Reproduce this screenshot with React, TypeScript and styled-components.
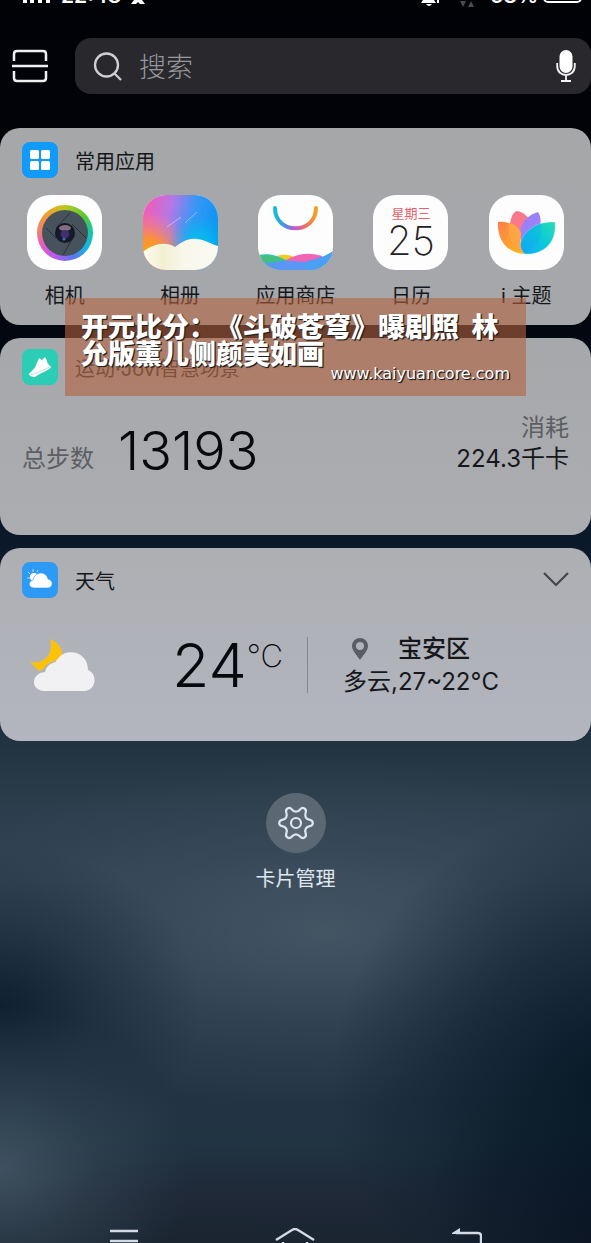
import React from "react";
import styled, { createGlobalStyle } from "styled-components";

const cjk = '"Noto Sans CJK SC", sans-serif';

const GlobalStyle = createGlobalStyle`
  * { box-sizing: border-box; }
  body { margin: 0; background: #020308; }
  button { border: 0; padding: 0; background: none; color: inherit; font: inherit; cursor: pointer; }
  a { color: inherit; text-decoration: none; }
  h1, h2, p { margin: 0; font-weight: 400; }
  svg { display: block; flex: none; }
`;

const Screen = styled.div`
  min-height: 100vh;
  display: flex;
  flex-direction: column;
  overflow: hidden;
  font-family: Inter, ${cjk};
  color: #15171b;
  background:
    radial-gradient(ellipse 32% 13% at 0% 94%, rgba(72, 92, 106, 0.75) 0%, rgba(66, 86, 100, 0.35) 50%, rgba(60, 80, 96, 0) 100%),
    radial-gradient(ellipse 34% 13% at 0% 81%, rgba(12, 30, 44, 0.9) 0%, rgba(14, 32, 46, 0.4) 50%, rgba(14, 32, 46, 0) 100%),
    radial-gradient(ellipse 48% 22% at 104% 87%, rgba(6, 24, 38, 0.95) 0%, rgba(8, 26, 40, 0.5) 55%, rgba(8, 28, 44, 0) 100%),
    radial-gradient(ellipse 34% 14% at 106% 98%, rgba(14, 16, 32, 1) 0%, rgba(14, 16, 32, 0) 100%),
    radial-gradient(ellipse 70% 14% at 55% 75%, rgba(74, 92, 104, 0.75) 0%, rgba(68, 86, 100, 0.35) 50%, rgba(60, 78, 94, 0) 100%),
    linear-gradient(180deg, #010206 0%, #03050c 24%, #071021 36%, #0c1a2c 45%, #223341 60%, #2c3e4c 65%, #314354 71%, #2d3f52 77%, #253746 84%, #203341 92%, #1f2938 96%, #1a2531 100%);
`;

const StatusBar = styled.div`
  height: 8px;
  display: flex;
  align-items: flex-end;
  justify-content: space-between;
  padding: 0 9px 0 22px;
  overflow: hidden;
  color: #fff;
`;

const StatusGroup = styled.div<{ $gap: number }>`
  height: 28px;
  display: flex;
  align-items: flex-end;
  gap: ${(p) => p.$gap}px;
`;

const StatusText = styled.span`
  font-size: 21px;
  font-weight: 600;
  line-height: 24px;
`;

const TopBar = styled.header`
  display: flex;
  align-items: center;
  gap: 27px;
  padding: 30px 0 34px 12px;
`;

const SearchBox = styled.label`
  flex: 1;
  min-width: 0;
  height: 56px;
  display: flex;
  align-items: center;
  gap: 16px;
  padding: 0 15px 0 18px;
  border-radius: 16px;
  background: #29292d;
`;

const SearchInput = styled.input`
  flex: 1;
  min-width: 0;
  border: 0;
  outline: 0;
  padding: 0;
  background: transparent;
  color: #e4e5e8;
  font: 300 27px/36px ${cjk};
  &::placeholder { color: #98989c; opacity: 1; }
`;

const Stack = styled.main`
  position: relative;
  display: flex;
  flex-direction: column;
  gap: 13px;
`;

const Card = styled.section<{ $top: number; $from: string; $to: string }>`
  padding: ${(p) => p.$top}px 22px 0;
  border-radius: 20px;
  background: linear-gradient(180deg, ${(p) => p.$from}, ${(p) => p.$to});
`;

const CardHeader = styled.div`
  display: flex;
  align-items: center;
  gap: 17px;
  height: 36px;
`;

const CardTitle = styled.h2<{ $muted?: boolean }>`
  flex: 1;
  padding-top: 4px;
  font-size: 20px;
  line-height: 24px;
  color: ${(p) => (p.$muted ? "#35373b" : "#15171b")};
`;

const HeaderIcon = styled.span<{ $bg: string }>`
  width: 36px;
  height: 36px;
  display: grid;
  place-items: center;
  border-radius: 8px;
  background: ${(p) => p.$bg};
`;

const AppGrid = styled.nav`
  display: grid;
  grid-template-columns: repeat(5, 1fr);
  margin: 0 -15px;
  padding: 17px 0;
`;

const AppLink = styled.a`
  display: flex;
  flex-direction: column;
  align-items: center;
  gap: 14px;
  font-size: 20px;
  line-height: 24px;
  white-space: nowrap;
`;

const AppTile = styled.span`
  width: 75px;
  height: 75px;
  display: flex;
  flex-direction: column;
  align-items: center;
  justify-content: center;
  border-radius: 23px;
  overflow: hidden;
  background: #fdfdfe;
`;

const LensRing = styled.span`
  width: 56px;
  height: 56px;
  display: grid;
  place-items: center;
  border-radius: 50%;
  background: conic-gradient(#b9c81e, #58c832 50deg, #12c9a0 85deg, #14b6e6 125deg, #5a78f0 160deg, #b45af0 200deg, #e65ac8 240deg, #f0826e 275deg, #f0a028 320deg, #b9c81e);
`;

const Weekday = styled.span`
  font-size: 13px;
  line-height: 16px;
  color: #e8606a;
`;

const DayNumber = styled.span`
  font-size: 40px;
  font-weight: 200;
  line-height: 40px;
  color: #222;
`;

const StepsRow = styled.div`
  display: flex;
  align-items: flex-end;
  padding: 27px 0 61px;
`;

const StepsLabel = styled.span`
  margin-right: 24px;
  font-size: 24px;
  line-height: 31px;
  color: #5c5e63;
`;

const StepsValue = styled.span`
  flex: 1;
  font-size: 54px;
  font-weight: 300;
  line-height: 46px;
  color: #08090c;
`;

const Burned = styled.p`
  display: flex;
  flex-direction: column;
  text-align: right;
  font-size: 24px;
  line-height: 31px;
`;

const BurnedLabel = styled.span`
  color: #5c5e63;
`;

const WeatherRow = styled.div`
  display: grid;
  grid-template-columns: 142fr 135fr 284fr;
  align-items: center;
  margin: 0 -22px;
  padding: 34px 0 43px 30px;
`;

const Temperature = styled.p`
  display: flex;
  align-items: flex-start;
  color: #08090c;
  font-size: 61px;
  font-weight: 300;
  line-height: 66px;
`;

const Unit = styled.span`
  font-size: 31px;
  font-weight: 200;
  line-height: 48px;
`;

const Place = styled.div`
  position: relative;
  display: flex;
  flex-direction: column;
  padding-left: 36px;
  font-size: 24px;
  line-height: 33px;
  white-space: nowrap;
  &::before {
    content: "";
    position: absolute;
    left: 0;
    top: 5px;
    bottom: 5px;
    width: 1px;
    background: #85878d;
  }
`;

const District = styled.span`
  display: flex;
  align-items: center;
  gap: 30px;
  padding-left: 9px;
  font-weight: 500;
`;

const Banner = styled.aside`
  position: absolute;
  top: 170px;
  left: 11%;
  width: 78%;
  padding: 14px 16px;
  background: rgba(178, 98, 62, 0.6);
  color: #fff;
  text-shadow: 1px 1px 1px #222, 1px 1px 0 #222;
`;

const BannerTitle = styled.h1`
  font: 900 27px/27px ${cjk};
  text-spacing-trim: space-all;
`;

const BannerLink = styled.a`
  display: block;
  text-align: right;
  font: 16px/16px "DejaVu Sans", sans-serif;
`;

const Manage = styled.button`
  align-self: center;
  display: flex;
  flex-direction: column;
  align-items: center;
  gap: 14px;
  margin-top: 52px;
  color: #e0e6ee;
  font-size: 20px;
  line-height: 24px;
`;

const Round = styled.span`
  width: 60px;
  height: 60px;
  display: grid;
  place-items: center;
  border-radius: 50%;
  background: #5b6874;
`;

const NavBar = styled.nav`
  height: 15px;
  display: grid;
  grid-template-columns: repeat(3, 1fr);
  align-items: start;
  margin-top: auto;
  padding: 0 38px;
  overflow: hidden;
`;

const NavButton = styled.button`
  display: flex;
  justify-content: center;
`;

/* Six-toothed gear outline, smoothed through the midpoints of its corners. */
function gearPath(outer: number, inner: number) {
  const pts: number[][] = [];
  for (let i = 0; i < 6; i++) {
    const corners = [[-9, outer], [9, outer], [19, inner], [41, inner]];
    corners.forEach(([deg, r]) => {
      const a = ((i * 60 + deg) * Math.PI) / 180;
      pts.push([Math.cos(a) * r, Math.sin(a) * r]);
    });
  }
  const mid = (a: number[], b: number[]) => `${((a[0] + b[0]) / 2).toFixed(2)} ${((a[1] + b[1]) / 2).toFixed(2)}`;
  const n = pts.length;
  return (
    `M${mid(pts[n - 1], pts[0])}` +
    pts.map((p, i) => `Q${p[0].toFixed(2)} ${p[1].toFixed(2)} ${mid(p, pts[(i + 1) % n])}`).join("") +
    "Z"
  );
}

const CameraArt = () => (
  <LensRing>
    <svg width="46" height="46" viewBox="0 0 46 46">
      <defs>
        <radialGradient id="lens" cx="50%" cy="55%">
          <stop offset="0" stopColor="#26306a" />
          <stop offset="0.5" stopColor="#171b33" />
          <stop offset="1" stopColor="#14171e" />
        </radialGradient>
      </defs>
      <circle cx="23" cy="23" r="23" fill="#46535d" />
      <g stroke="#273038" strokeWidth="1" fill="none">
        <path d="M14 18L28 3M30 14L44 28M32 26L21 45M14 28L4 18" />
      </g>
      <circle cx="23" cy="23" r="10" fill="url(#lens)" />
      <ellipse cx="23" cy="18" rx="6" ry="3" fill="#a58a98" opacity="0.75" />
      <circle cx="23" cy="24" r="4" fill="#41306e" />
      <circle cx="22" cy="29" r="1.500" fill="#4868c8" />
    </svg>
  </LensRing>
);

const GalleryArt = () => (
  <svg width="75" height="75" viewBox="0 0 75 75">
    <defs>
      <linearGradient id="sky" x1="0" y1="0.200" x2="1" y2="0.400">
        <stop offset="0" stopColor="#f55ab4" />
        <stop offset="0.350" stopColor="#b478e6" />
        <stop offset="0.650" stopColor="#3c96f5" />
        <stop offset="1" stopColor="#0a96f5" />
      </linearGradient>
      <radialGradient id="sun" cx="0.050" cy="0.800" r="0.600">
        <stop offset="0" stopColor="#ffaa00" />
        <stop offset="0.400" stopColor="#ff9628" stopOpacity="0.850" />
        <stop offset="1" stopColor="#ff7896" stopOpacity="0" />
      </radialGradient>
      <radialGradient id="sea" cx="0.750" cy="0.650" r="0.400">
        <stop offset="0" stopColor="#00c8e6" />
        <stop offset="1" stopColor="#00b4f0" stopOpacity="0" />
      </radialGradient>
      <linearGradient id="dune" x1="0" y1="0" x2="1" y2="0">
        <stop offset="0" stopColor="#fffdf2" />
        <stop offset="0.250" stopColor="#f2f0d2" />
        <stop offset="0.550" stopColor="#f8f7ea" />
        <stop offset="1" stopColor="#fbfaf2" />
      </linearGradient>
    </defs>
    <rect width="75" height="75" fill="url(#sky)" />
    <rect width="75" height="75" fill="url(#sun)" />
    <rect width="75" height="75" fill="url(#sea)" />
    <path d="M24 32L38 22M42 28L54 17" stroke="#fff" strokeWidth="1" opacity="0.400" />
    <path d="M0 57C10 49 22 46 32 52C38 48 44 43 54 44C63 45 68 49 75 51V75H0Z" fill="url(#dune)" />
  </svg>
);

const StoreArt = () => (
  <svg width="75" height="75" viewBox="0 0 75 75">
    <defs>
      <linearGradient id="handle" x1="0" y1="0" x2="1" y2="0">
        <stop offset="0" stopColor="#14bed2" />
        <stop offset="0.250" stopColor="#508ce6" />
        <stop offset="0.500" stopColor="#c85ac8" />
        <stop offset="0.750" stopColor="#f06e64" />
        <stop offset="1" stopColor="#f5a01e" />
      </linearGradient>
    </defs>
    <path d="M17 13C17 40 58 40 58 13" fill="none" stroke="url(#handle)" strokeWidth="4" strokeLinecap="round" />
    <path d="M14 63C24 58 32 59 42 65V75H14Z" fill="#f5c81e" />
    <path d="M0 60C12 58 18 60 30 66V75H0Z" fill="#28c8be" />
    <path d="M28 65C42 58 50 57 64 61V75H28Z" fill="#f064b4" />
    <path d="M50 66C60 64 68 61 75 56V75H50Z" fill="#14b4e6" />
    <path d="M0 66C12 71 22 64 34 66C48 68 56 66 64 61V75H0Z" fill="#5a96f5" />
    <path d="M50 66C60 64 68 61 75 57V75H44Z" fill="#4ba0f5" />
    <path d="M3 66C12 70 20 65 28 65C18 62 12 60 3 60Z" fill="#46be82" />
  </svg>
);

const ThemeArt = () => (
  <svg width="75" height="75" viewBox="0 0 75 75">
    <defs>
      <linearGradient id="orange" x1="0" y1="0" x2="0.800" y2="1">
        <stop offset="0" stopColor="#ff7d4b" />
        <stop offset="1" stopColor="#ffb41e" />
      </linearGradient>
      <linearGradient id="teal" x1="0" y1="1" x2="1" y2="0">
        <stop offset="0" stopColor="#14aaf5" />
        <stop offset="0.500" stopColor="#0ac8dc" />
        <stop offset="1" stopColor="#28dcb4" />
      </linearGradient>
    </defs>
    <path d="M21 29C22 22 24 17 28 16C34 17 39 21 42 27L35 48Z" fill="#fa788c" />
    <path d="M49 17C42 19 35 24 32 32C30 42 32 48 36 54C48 44 56 28 49 17Z" fill="#9b82fa" />
    <path d="M9 27C8 45 18 58 36 59C31 52 31 46 32 38C26 29 18 26 9 27Z" fill="url(#orange)" />
    <path d="M20 28C24 28 30 32 32 38C31 46 31 52 35 58C23 52 18 40 20 28Z" fill="#ffa546" />
    <path d="M66 27C68 46 56 60 36 59C28 52 32 42 40 35C48 28 56 27 66 27Z" fill="url(#teal)" stroke="#fff" strokeWidth="0.500" strokeOpacity="0.500" />
    <path d="M36 59C28 52 32 42 40 35C44 31 48 30 52 28C55 41 48 52 36 59Z" fill="#1496f5" opacity="0.250" />
  </svg>
);

const apps = [
  { name: "相机", art: <CameraArt /> },
  { name: "相册", art: <GalleryArt /> },
  { name: "应用商店", art: <StoreArt /> },
  { name: "日历", art: <><Weekday>星期三</Weekday><DayNumber>25</DayNumber></> },
  { name: "i 主题", art: <ThemeArt /> },
];

export default function App() {
  return (
    <Screen>
      <GlobalStyle />
      <StatusBar>
        <StatusGroup $gap={10}>
          <svg width="29" height="24" viewBox="0 0 29 24" fill="#fff">
            <path d="M1 12h4v7H1zM8 9h4v10H8zM16 5h4v14h-4zM24 1h4v18h-4z" />
          </svg>
          <StatusText>22:48</StatusText>
          <svg width="14" height="26" viewBox="0 0 14 26" fill="#fff">
            <path d="M4 10h6l1 8 3 4H9l-2-2-2 2H0l3-4z" />
          </svg>
        </StatusGroup>
        <StatusGroup $gap={5}>
          <svg width="20" height="26" viewBox="0 0 20 26" fill="#fff">
            <path d="M3 18C5 8 12 8 14 18l2 3H1zM6 22h6q-3 4-6 0M17 17h2v4h-2z" />
          </svg>
          <svg width="40" height="26" viewBox="0 0 40 26" fill="#4a4b50">
            <path d="M15 19h6l-3 6zM23 25h6l-3-6z" />
          </svg>
          <StatusText>68%</StatusText>
          <svg width="39" height="24" viewBox="0 0 39 24" fill="none" stroke="#fff" strokeWidth="2">
            <rect x="1" y="2" width="37" height="16" rx="4" />
          </svg>
        </StatusGroup>
      </StatusBar>

      <TopBar>
        <button aria-label="扫一扫">
          <svg width="36" height="34" viewBox="0 0 36 34" fill="none" stroke="#f0f0f2" strokeWidth="2.500">
            <path d="M2 12V5Q2 2 5 2H31Q34 2 34 5V12M0 17H36M2 22V29Q2 32 5 32H31Q34 32 34 29V22" />
          </svg>
        </button>
        <SearchBox>
          <svg width="30" height="30" viewBox="0 0 30 30" fill="none" stroke="#d0d0d3" strokeWidth="2.300">
            <circle cx="13.500" cy="14" r="11.500" />
            <path d="M21.500 22.500L28 29" />
          </svg>
          <SearchInput type="search" placeholder="搜索" aria-label="搜索" />
          <button aria-label="语音搜索">
            <svg width="20" height="32" viewBox="0 0 20 32">
              <rect x="3.500" y="0" width="13" height="23" rx="6.500" fill="#fff" />
              <path d="M1.200 13V16C1.200 28 18.800 28 18.800 16V13M10 25V31M5 31H15" fill="none" stroke="#f4f4f6" strokeWidth="1.800" />
            </svg>
          </button>
        </SearchBox>
      </TopBar>

      <Stack>
        <Card $top={14} $from="#a5a7a9" $to="#a5a7aa">
          <CardHeader>
            <HeaderIcon $bg="#109bfa">
              <svg width="20" height="20" viewBox="0 0 20 20" fill="#fff">
                <rect width="9" height="9" rx="1.500" />
                <rect x="11" width="9" height="9" rx="1.500" />
                <rect y="11" width="9" height="9" rx="1.500" />
                <rect x="11" y="11" width="9" height="9" rx="1.500" />
              </svg>
            </HeaderIcon>
            <CardTitle>常用应用</CardTitle>
          </CardHeader>
          <AppGrid>
            {apps.map((app) => (
              <AppLink href="#" key={app.name}>
                <AppTile>{app.art}</AppTile>
                {app.name}
              </AppLink>
            ))}
          </AppGrid>
        </Card>

        <Card $top={11} $from="#a6a8ab" $to="#abadb1">
          <CardHeader>
            <HeaderIcon $bg="#2bcdb4">
              <svg width="24" height="22" viewBox="0 0 24 22">
                <path d="M1 18C3 15 7 13 8 9L11 2L14 4L17 1L19 5C19 8 22 9 23 11C22 14 12 17 7 21C4 21 1 20 1 18Z" fill="#fff" />
                <path d="M2 19C9 18 16 13 22 11" stroke="#b4e8de" fill="none" />
              </svg>
            </HeaderIcon>
            <CardTitle $muted>运动·Jovi智慧场景</CardTitle>
          </CardHeader>
          <StepsRow>
            <StepsLabel>总步数</StepsLabel>
            <StepsValue>13193</StepsValue>
            <Burned>
              <BurnedLabel>消耗</BurnedLabel>
              <span>224.3千卡</span>
            </Burned>
          </StepsRow>
        </Card>

        <Card $top={14} $from="#adafb2" $to="#b3b5c0">
          <CardHeader>
            <HeaderIcon $bg="#2d9af5">
              <svg width="26" height="22" viewBox="0 0 26 22" fill="#fff">
                <path d="M6 0v3M1 3l2 2M0 9h3M11 1l-1 2" stroke="#b8dcfb" />
                <circle cx="7" cy="8" r="4" />
                <path d="M7 19C1 19 1 12 6 11C8 2 19 2 21 10C27 11 26 19 21 19Z" stroke="#2d9af5" strokeWidth="0.600" />
              </svg>
            </HeaderIcon>
            <CardTitle>天气</CardTitle>
            <button aria-label="展开天气">
              <svg width="26" height="16" viewBox="0 0 26 16" fill="none" stroke="#45474c" strokeWidth="2.200">
                <path d="M1 1L13 13L25 1" />
              </svg>
            </button>
          </CardHeader>
          <WeatherRow>
            <svg width="66" height="54" viewBox="0 0 66 54">
              <path d="M20 1C35 8 34 18 27 25L9 33L0 24C15 27 24 15 20 1Z" fill="#fac30a" />
              <path d="M14 53C0 52 1 35 15 34C17 25 23 24 27 22C34 9 58 12 58 32C68 36 66 52 55 53Z" fill="#f1f1f4" />
              <path d="M13 34C16 26 21 25 26 23" fill="none" stroke="#b1b2b8" strokeWidth="1.500" />
            </svg>
            <Temperature>24<Unit>°C</Unit></Temperature>
            <Place>
              <District>
                <svg width="16" height="22" viewBox="0 0 16 22">
                  <path fillRule="evenodd" fill="#5a5c62" d="M8 0A8 8 0 0 1 16 8C16 13 11 17 8 22C5 17 0 13 0 8A8 8 0 0 1 8 0ZM8 4A4 4 0 1 0 8 12A4 4 0 1 0 8 4Z" />
                </svg>
                宝安区
              </District>
              <span>多云,27~22°C</span>
            </Place>
          </WeatherRow>
        </Card>

        <Banner>
          <BannerTitle>开元比分：《斗破苍穹》曝剧照{"\u00a0 "}林允版薰儿侧颜美如画</BannerTitle>
          <BannerLink href="#">www.kaiyuancore.com</BannerLink>
        </Banner>
      </Stack>

      <Manage>
        <Round>
          <svg width="38" height="38" viewBox="-19 -19 38 38" fill="none" stroke="#dde5ef" strokeWidth="2.200">
            <path d={gearPath(17, 11.5)} />
            <circle r="5" />
          </svg>
        </Round>
        卡片管理
      </Manage>

      <NavBar>
        <NavButton aria-label="菜单">
          <svg width="28" height="24" viewBox="0 0 28 24" stroke="#d2dae6" strokeWidth="2.400">
            <path d="M0 3H28M0 13H28M0 23H28" />
          </svg>
        </NavButton>
        <NavButton aria-label="主屏幕">
          <svg width="40" height="28" viewBox="0 0 40 28" fill="none" stroke="#d2dae6" strokeWidth="2.400">
            <path d="M1 12L17 2Q20 0 23 2L39 12M8 14V26H32V14" />
          </svg>
        </NavButton>
        <NavButton aria-label="返回">
          <svg width="30" height="28" viewBox="0 0 30 28" fill="none" stroke="#d2dae6" strokeWidth="2.400">
            <path d="M4 5H26Q29 5 29 8V26H8" />
            <path d="M0 5L8 0V6H0Z" fill="#d2dae6" stroke="none" />
          </svg>
        </NavButton>
      </NavBar>
    </Screen>
  );
}
